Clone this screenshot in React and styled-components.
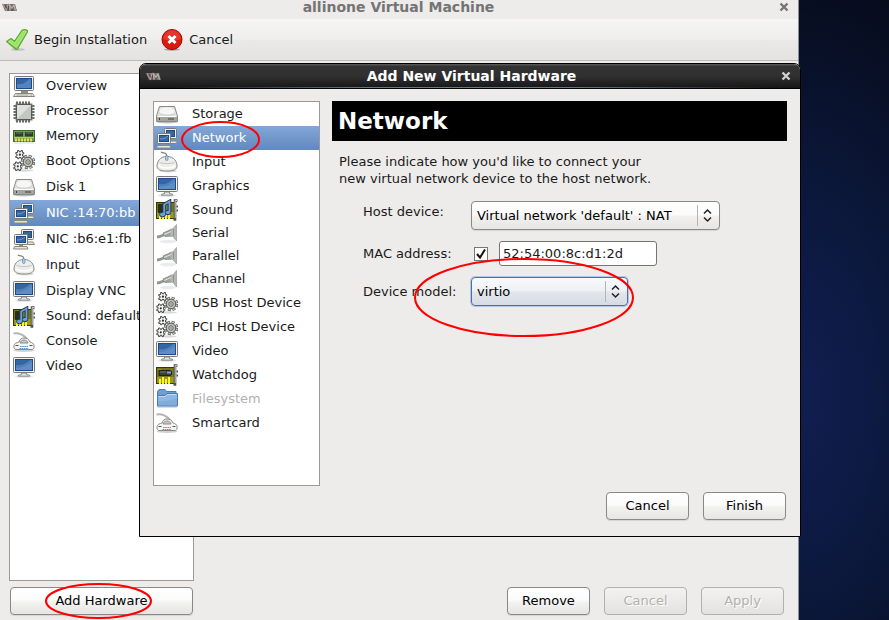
import React, { useState } from "react";
import styled, { createGlobalStyle, css } from "styled-components";

const GlobalStyle = createGlobalStyle`
  *, *::before, *::after { box-sizing: border-box; }
  body { margin: 0; background: #0b1638; }
  body, button, input, select {
    font-family: "DejaVu Sans", Verdana, sans-serif;
    font-size: 13px;
    line-height: 17px;
    color: #1a1a1a;
  }
`;

/* ---------- icons ---------- */

const IconSvg = styled.svg`
  display: block;
  flex: none;
  width: 22px;
  height: 22px;
`;

const Icon = ({ children }) => (
  <IconSvg viewBox="0 0 22 22" aria-hidden="true">{children}</IconSvg>
);

const Screen = () => (
  <>
    <rect x="0.5" y="1.5" width="21" height="15" rx="1" fill="#f2f2ef" stroke="#777a75" />
    <rect x="2.5" y="3.5" width="17" height="11" fill="#3465a4" stroke="#204a87" />
    <path d="M3 14V9c6 1 10-1 14-5h2v10z" fill="#5f8fcb" opacity=".65" />
    <path d="M3 12c6 0 11-2 16-6v8H3z" fill="#8fb2dd" opacity=".25" />
  </>
);

const DisplayIcon = () => (
  <Icon>
    <ellipse cx="11" cy="20.5" rx="9" ry="1.3" fill="#000" opacity=".12" />
    <Screen />
    <path d="M8.5 17h5v1.5l3 .7v1h-11v-1l3-.7z" fill="#e4e4e1" stroke="#777a75" strokeWidth=".8" />
  </Icon>
);

const ComputerIcon = () => (
  <Icon>
    <rect x="1.5" y=".5" width="19" height="14" rx="1" fill="#f1efe9" stroke="#777a75" />
    <rect x="3.5" y="2.5" width="15" height="10" fill="#3465a4" stroke="#204a87" />
    <path d="M4 12V8c5 1 9-1 12-5h2v9z" fill="#6b98cf" opacity=".6" />
    <path d="M8 15h7v2H8z" fill="#8e8f8a" />
    <path d="M2.500 17.500h17l2 3H.5z" fill="#e9e5dc" stroke="#8b8778" />
    <path d="M3.500 19h12M17 19h2" stroke="#a8a496" />
  </Icon>
);

const ChipIcon = () => (
  <Icon>
    <path d="M4 .500v21M7 .500v21M10 .500v21M13 .500v21M16 .500v21M.500 5h21M.500 8h21M.500 11h21M.500 14h21M.500 17h21" stroke="#3c3f3c" strokeWidth="1.600" />
    <path d="M2.500 2.500h17v17h-17z" fill="#777a75" />
    <rect x="3.500" y="3.500" width="15" height="15" rx="1" fill="#c4c6c2" stroke="#555753" />
    <path d="M4 4h14L4 18z" fill="#ecedeb" opacity=".7" />
  </Icon>
);

const MemoryIcon = () => (
  <Icon>
    <rect x=".5" y="5.500" width="21" height="11" fill="#6ea24a" stroke="#3b6e2c" />
    <rect x="2" y="7" width="8" height="4.500" fill="#333835" />
    <rect x="12" y="7" width="8" height="4.500" fill="#333835" />
    <path d="M3 8h6M13 8h6" stroke="#767c78" />
    <path d="M1 12.500h20" stroke="#a9c98b" />
    <path d="M2 15h18" stroke="#eed94f" strokeWidth="3" strokeDasharray="2 1" />
    <path d="M1 18h20" stroke="#000" opacity=".15" />
  </Icon>
);

const GearsIcon = () => (
  <Icon>
    <ellipse cx="12" cy="20.500" rx="9" ry="1.200" fill="#000" opacity=".15" />
    <circle cx="15" cy="12" r="5.800" fill="none" stroke="#555753" strokeWidth="3" strokeDasharray="2.800 1.755" />
    <circle cx="15" cy="12" r="5.800" fill="none" stroke="#c9ccc5" strokeWidth="1.600" strokeDasharray="1.800 2.755" strokeDashoffset="-.5" />
    <circle cx="15" cy="12" r="4.800" fill="#bfc3bb" stroke="#555753" />
    <circle cx="15" cy="12" r="2.200" fill="#eeeeec" stroke="#555753" />
    <circle cx="15" cy="12" r=".8" fill="#444" />
    <path d="M4.500 .5h1.500v1.200h2V.5h1.500v2h1.200v1.500H9.500v2h1.200v1.500H9.500v1.200H8V7.500H6v1.200H4.500V7.500H2.800V6H4V4H2.800V2.500h1.700z" fill="#f3f3f1" stroke="#3f413e" strokeWidth=".9" />
    <circle cx="6.900" cy="4.700" r="1.100" fill="#333" />
    <path d="M2.500 12h1.500v1.200h2V12h1.500v1.800h1.300v1.500H7.500v2h1.300v1.500H7.500v1.700H6v-1.200H4v1.200H2.500v-1.700H.8v-1.500H2v-2H.8v-1.500h1.700z" fill="#f3f3f1" stroke="#3f413e" strokeWidth=".9" />
    <circle cx="4.800" cy="16.300" r="1.100" fill="#333" />
  </Icon>
);

const DiskIcon = () => (
  <Icon>
    <ellipse cx="11" cy="19" rx="10.500" ry="1.500" fill="#000" opacity=".25" />
    <path d="M3.500 3.500h15l3 9.500v5.500h-21V13z" fill="#e2e3e0" stroke="#888a85" />
    <path d="M1 13.500h20v4.500H1z" fill="#a3a5a0" />
    <path d="M1.500 13.500h19" stroke="#fff" />
    <ellipse cx="11" cy="8.500" rx="7.500" ry="4.200" fill="#f6f6f5" />
    <path d="M3.500 10c2 3 13 3 15 0" fill="none" stroke="#c4c5c2" />
    <path d="M12.500 16h6M3 16h2" stroke="#3f413e" strokeDasharray="1 1" strokeWidth="1.800" />
  </Icon>
);

const NetworkIcon = () => (
  <Icon>
    <rect x="8.500" y="1.500" width="12" height="10" rx="1" fill="#f1f0eb" stroke="#777a75" />
    <rect x="10.500" y="3.500" width="8" height="6" fill="#3465a4" stroke="#204a87" />
    <path d="M14 14h6l1.500 2.500H14z" fill="#e9e5dc" stroke="#8b8778" />
    <rect x="1.500" y="6.500" width="13" height="10" rx="1" fill="#f1f0eb" stroke="#777a75" />
    <rect x="3.500" y="8.500" width="9" height="6" fill="#3465a4" stroke="#204a87" />
    <path d="M4 12c4 0 6-1 8-3" stroke="#729fcf" fill="none" />
    <path d="M6 17h4v1.500H6z" fill="#8e8f8a" />
    <path d="M1.500 18.500h12.500l1 2.500H.5z" fill="#e9e5dc" stroke="#8b8778" />
  </Icon>
);

const MouseIcon = () => (
  <Icon>
    <ellipse cx="12" cy="20" rx="9" ry="1.500" fill="#000" opacity=".15" />
    <path d="M5 .8c1 2 4 .3 5.200 2.200.5.800.2 1.500.2 2.500" fill="none" stroke="#777a75" strokeWidth="1.200" />
    <path d="M1 15c0-4.500 3-9.500 10-9.500S21 10.500 21 15c0 3.500-3.500 5-10 5S1 18.500 1 15z" fill="#ededea" stroke="#888a85" />
    <path d="M3.500 11.500c4 1.500 11 1.500 15 0" fill="none" stroke="#c5c7c2" />
    <path d="M3 14c1 4 15 4 16 0" fill="none" stroke="#fff" strokeWidth="1.500" />
    <rect x="9.500" y="4.500" width="2.500" height="5" rx="1.200" fill="#a8c9ed" stroke="#4f7db2" strokeWidth=".6" />
  </Icon>
);

const Card = () => (
  <>
    <rect x=".5" y="3.500" width="18" height="16" fill="#77771a" stroke="#373800" />
    <path d="M1 13h17v6H1z" fill="#9a9a22" />
    <path d="M4 15v5M7 13v7M10 15v5M13 13v7" stroke="#fcf32b" strokeWidth="2" />
    <path d="M2.500 6h3M2.500 9h2" stroke="#b1b143" />
    <path d="M21.500 1.500H19v19h-1.500" fill="none" stroke="#4f524d" strokeWidth="2.600" />
    <path d="M21.500 1.500h-2.300V19" fill="none" stroke="#c7c9c4" />
    <path d="M20.500 7.500H22M20.500 11.500H22" stroke="#555" strokeWidth="2" />
  </>
);

const SoundIcon = () => (
  <Icon>
    <Card />
    <rect x="2" y="5" width="6" height="9" fill="#26311c" />
    <path d="M8 15V5.500l5.500-3V13" fill="none" stroke="#183861" strokeWidth="3.600" />
    <ellipse cx="6.500" cy="15.500" rx="3" ry="2.300" fill="#729fcf" stroke="#183861" />
    <ellipse cx="12" cy="13.500" rx="2.700" ry="2.200" fill="#729fcf" stroke="#183861" />
    <path d="M8.200 15V5.500l5.300-3V13" fill="none" stroke="#729fcf" strokeWidth="1.800" />
  </Icon>
);

const CardIcon = () => (
  <Icon>
    <Card />
    <path d="M3 6.500h11l1.500 1v3L14 11.500H3z" fill="#393d3b" stroke="#202221" />
    <path d="M11 8.500h4" stroke="#78a5dc" strokeWidth="2" />
    <path d="M4 8h6" stroke="#777d79" />
  </Icon>
);

const PlugIcon = () => (
  <Icon>
    <ellipse cx="12" cy="18.500" rx="8" ry="1.800" fill="#000" opacity=".08" />
    <path d="M1 14c3 0 5-1.500 8-2.500" stroke="#93958f" strokeWidth="2.800" fill="none" />
    <path d="M7 10l8-3.500V13l-6 .500z" fill="#a5a7a2" stroke="#7e807b" strokeWidth=".8" />
    <path d="M14 6.500l3-.8 3.500-4.200V18L17 13.500l-3-.5z" fill="#b4b6b1" stroke="#979994" strokeWidth=".7" />
    <path d="M17.500 6v7" stroke="#8f918c" />
    <path d="M8 11.500l7-3" stroke="#e4e5e2" />
  </Icon>
);

const ConsoleIcon = () => (
  <Icon>
    <ellipse cx="11" cy="19.500" rx="10.500" ry="1.500" fill="#000" opacity=".18" />
    <path d="M.5 2.500c6-.8 10 1.500 13.500 5.500" fill="none" stroke="#b4b6b1" strokeWidth="2" />
    <path d="M6 11c1-3 2.500-4 5-4s5 1 6 4c2 .5 4 1.500 4 3.500v2c0 1-1 2-2 2H3c-1 0-2-1-2-2v-2C1 12.500 4 11.500 6 11z" fill="#f5f5f3" stroke="#888a85" />
    <path d="M7 12c.5-2 2-3 4-3s3.500 1 4 3z" fill="#c9cac7" stroke="#777a75" strokeWidth=".8" />
    <path d="M2.500 14.500h3M16.500 14.500h3" stroke="#555753" />
    <path d="M7 15.500h8M6.500 17.500h9" stroke="#5b93d4" strokeWidth="1.200" strokeDasharray="1.600 .6" />
  </Icon>
);

const FolderIcon = () => (
  <Icon>
    <path d="M1.500 5V3.500l1.500-2h6l1.500 2h9.500V8H1.500z" fill="#6e9ed2" stroke="#4a7ab2" />
    <path d="M1.500 7.500h7.500l2-2h10.500v12.500h-20z" fill="#8fb7e3" stroke="#4a7ab2" />
    <path d="M2.500 8.500H9.500l2-2h9" fill="none" stroke="#c3daf2" />
    <path d="M2 13c7 1 13-1 19-3v8H2z" fill="#6d9cd0" opacity=".4" />
    <path d="M1 19.200h20" stroke="#000" opacity=".2" />
  </Icon>
);

const CheckIcon = () => (
  <Icon>
    <ellipse cx="12" cy="20.500" rx="7" ry="1.300" fill="#000" opacity=".15" />
    <path d="M.6 12.500L5 9.500l3.500 2.800L16 1.200q3-1.400 6 .8L11.500 20q-1 .8-2 0z" fill="#84d24e" stroke="#5aa82c" strokeWidth="1.100" strokeLinejoin="round" />
    <path d="M2.500 12.800L4.800 11l4 3.200L17 2.200q1.500-.6 3.200.2L10.500 18z" fill="#9be068" stroke="#c2f29c" strokeWidth=".7" />
  </Icon>
);

const StopIcon = () => (
  <Icon>
    <ellipse cx="11" cy="20.500" rx="8" ry="1.200" fill="#000" opacity=".3" />
    <circle cx="11" cy="10.500" r="10" fill="#d81a10" stroke="#a40000" />
    <path d="M2 10a9 9 0 0118 0c-5 2-13 2-18 0z" fill="#ef5145" opacity=".5" />
    <path d="M7.500 7l7 7m0-7l-7 7" stroke="#fff" strokeWidth="3" />
  </Icon>
);

const LogoSvg = styled.svg`
  display: block;
  width: 15px;
  height: 9px;
`;

const VmLogo = () => (
  <LogoSvg viewBox="0 0 15 9" aria-hidden="true">
    <path d="M0 1h13l2 7H3z" fill="#77736f" />
    <path d="M1 1.500l3.500 5.500L6 1.500" fill="none" stroke="#a9a39e" strokeWidth="1.300" />
    <path d="M3 2l1.500 3.500" stroke="#8b3240" strokeWidth="1.200" />
    <path d="M8 7.500L7.500 2l2.300 3L12 2l1.500 5.500" fill="none" stroke="#b4b0ac" strokeWidth="1.200" />
    <path d="M6 8l.5-5M10 8V6" stroke="#383838" strokeWidth=".8" />
  </LogoSvg>
);

const CloseSvg = styled.svg`
  display: block;
  width: 10px;
  height: 10px;
`;

const CloseGlyph = () => (
  <CloseSvg viewBox="0 0 10 10" aria-hidden="true">
    <path d="M1.500 1.500l7 7m0-7l-7 7" stroke="currentColor" strokeWidth="2.400" />
  </CloseSvg>
);

/* ---------- shared controls ---------- */

const PushButton = styled.button`
  position: relative;
  height: 28px;
  min-width: ${(p) => (p.$wide ? "100%" : "83px")};
  padding: 0 8px 1px;
  border: 1px solid #8b8985;
  border-radius: 4px;
  background: linear-gradient(#ffffff, #fbfbfb 45%, #f2f2f1 55%, #e6e5e3);
  box-shadow: 0 1px 1px rgba(0, 0, 0, 0.1);
  color: #000;
  &:disabled {
    border-color: #b2b0ad;
    background: linear-gradient(#f3f2f1, #e3e2e0);
    box-shadow: none;
    color: #b3b1ae;
    text-shadow: 1px 1px 0 #fff;
  }
`;

const IconButton = styled.button`
  display: flex;
  padding: 0;
  border: 0;
  background: none;
  color: ${(p) => (p.$light ? "#d0d0d0" : "#747474")};
`;

const TitleBar = styled.header`
  display: grid;
  grid-template-columns: 16px 1fr 10px;
  align-items: center;
  height: ${(p) => (p.$dark ? "25px" : "19px")};
  padding: ${(p) => (p.$dark ? "0 9px 0 6px" : "0 9px 5px 2px")};
  ${(p) =>
    p.$dark &&
    css`
      border-bottom: 1px solid #000;
      border-radius: 6px 6px 0 0;
      background:
        linear-gradient(90deg, transparent 5%, #61799c 35%, #61799c 65%, transparent 95%) 0 100% / 100% 1px no-repeat,
        linear-gradient(#555 0 1px, #333 2px, #303030 50%, #171717);
      color: #fff;
    `}
`;

const TitleText = styled.h1`
  margin: 0;
  font-size: 14px;
  line-height: 14px;
  text-align: center;
  color: ${(p) => (p.$dark ? "#fff" : "#747474")};
`;

const DeviceList = styled.ul`
  margin: 0;
  padding: 0;
  list-style: none;
  overflow: hidden;
  border: 1px solid #9c9a96;
  background: #fff;
  ${(p) => (p.$grow ? "flex: 1;" : "min-height: 385px;")}
`;

const DeviceRow = styled.li`
  height: ${(p) => p.$height}px;
  background: ${(p) => (p.$selected ? "linear-gradient(#83a7d8, #6189be)" : "transparent")};
`;

const DeviceButton = styled.button`
  display: flex;
  align-items: center;
  gap: ${(p) => p.$gap}px;
  width: 100%;
  height: 100%;
  padding: 0 0 0 ${(p) => p.$inset}px;
  border: 0;
  background: none;
  text-align: left;
  white-space: nowrap;
  color: ${(p) => (p.$selected ? "#fff" : "#1a1a1a")};
  &:disabled { color: #b3b1ae; }
`;

const DeviceLabel = styled.span`
  position: relative;
  padding-bottom: 2px;
`;

const MarkSvg = styled.svg`
  position: absolute;
  left: ${(p) => p.$left}px;
  top: ${(p) => p.$top}px;
  z-index: 2;
  overflow: visible;
  pointer-events: none;
`;

const Mark = ({ width, height, left, top }) => (
  <MarkSvg width={width} height={height} $left={left} $top={top} aria-hidden="true">
    <ellipse cx={width / 2} cy={height / 2} rx={width / 2 - 1} ry={height / 2 - 1} fill="none" stroke="#f00" strokeWidth="2" />
  </MarkSvg>
);

/* ---------- windows ---------- */

const Desktop = styled.div`
  position: relative;
  min-height: 100vh;
  padding-right: 90px;
  display: flex;
  background: radial-gradient(ellipse 260px 500px at 90% 64%, #111f50 0, #0e1b47 20%, #0b1738 45%, #060a18 92%);
`;

const MachineWindow = styled.main`
  flex: 1;
  display: flex;
  flex-direction: column;
  min-height: 100vh;
  border-right: 1px solid #8f8f8f;
  background: #edeceb;
`;

const Toolbar = styled.div`
  display: flex;
  align-items: center;
  gap: 14px;
  height: 42px;
  padding: 0 6px;
  border-bottom: 1px solid #bdbbb8;
  background: linear-gradient(#f5f5f3, #efeeec 50%, #eae9e7 51%, #e4e3e1);
`;

const ToolButton = styled.button`
  display: flex;
  align-items: center;
  gap: 6px;
  padding: 0;
  border: 0;
  background: none;
`;

const MachineBody = styled.div`
  flex: 1;
  display: flex;
  flex-direction: column;
  width: 185px;
  margin: 12px 0 0 9px;
`;

const MachineFooter = styled.footer`
  display: flex;
  gap: 14px;
  padding: 6px 14px 5px 10px;
`;

const AddSlot = styled.div`
  width: 183px;
  margin-right: auto;
`;

const Dialog = styled.section`
  position: absolute;
  left: 139px;
  right: 88px;
  top: 63px;
  border: 1px solid #000;
  border-radius: 7px 7px 0 0;
  background: #edeceb;
`;

const DialogBody = styled.div`
  display: grid;
  grid-template-columns: 167px 1fr;
  gap: 12px;
  padding: 12px 13px 0;
`;

const DialogFooter = styled.footer`
  display: flex;
  justify-content: flex-end;
  gap: 14px;
  padding: 6px 14px 16px;
`;

const PageTitle = styled.h2`
  margin: 0;
  padding: 0 6px;
  background: #000;
  color: #fff;
  font-size: 23px;
  line-height: 40px;
`;

const Intro = styled.p`
  margin: 12px 7px 0;
`;

const Form = styled.form`
  display: grid;
  grid-template-columns: 108px 1fr;
  row-gap: 11px;
  align-items: center;
  margin: 14px 0 0 31px;
`;

const FieldLabel = styled.label`
  white-space: nowrap;
  ${(p) => p.$top && "align-self: start; padding-top: 2px;"}
`;

const AddressRow = styled.div`
  display: flex;
  align-items: center;
  gap: 11px;
  padding-left: 3px;
`;

const TickBox = styled.input`
  appearance: none;
  width: 14px;
  height: 14px;
  margin: 0;
  border: 1px solid #777;
  background: #fff;
  &:checked {
    background: #fff url("data:image/svg+xml,%3Csvg xmlns='http://www.w3.org/2000/svg' viewBox='0 0 12 12'%3E%3Cpath d='M2 6l3 3.500 5-8' fill='none' stroke='%23111' stroke-width='2'/%3E%3C/svg%3E") center / 12px 12px no-repeat;
  }
`;

const AddressInput = styled.input`
  width: 158px;
  height: 25px;
  padding: 0 3px;
  border: 1px solid #777571;
  border-radius: 3px;
  background: #fff;
`;

const ComboBox = styled.div`
  position: relative;
  width: ${(p) => p.$width}px;
`;

const Combo = styled.select`
  appearance: none;
  display: block;
  width: 100%;
  height: 29px;
  padding: 0 30px 1px 5px;
  border: 1px solid ${(p) => (p.$active ? "#4f709e" : "#8b8985")};
  border-radius: 4px;
  background: ${(p) =>
    p.$active
      ? "linear-gradient(#f8fafd, #edf0f5 48%, #e3e6ec 52%, #d6dbe4)"
      : "linear-gradient(#ffffff, #fafafa 48%, #f1f1f0 52%, #e6e5e3)"};
  box-shadow: ${(p) => (p.$active ? "0 0 0 1px #b3c6e3" : "0 1px 1px rgba(0, 0, 0, 0.1)")};
  color: #000;
`;

const ComboArrows = styled.svg`
  position: absolute;
  right: 7px;
  top: 4px;
  width: 16px;
  height: 21px;
  pointer-events: none;
`;

const Chooser = ({ id, value, width, active, children }) => (
  <ComboBox $width={width}>
    <Combo id={id} defaultValue={value} $active={active}>
      <option>{value}</option>
    </Combo>
    <ComboArrows viewBox="0 0 16 21" aria-hidden="true">
      <path d="M.5 0v21" stroke="#b7b5b2" />
      <path d="M7 8.500l3.500-3.500L14 8.500M7 12.500l3.500 3.500 3.500-3.500" fill="none" stroke="#222" strokeWidth="1.500" />
    </ComboArrows>
    {children}
  </ComboBox>
);

/* ---------- data ---------- */

const machineDevices = [
  ["Overview", ComputerIcon, 25],
  ["Processor", ChipIcon, 25],
  ["Memory", MemoryIcon, 24],
  ["Boot Options", GearsIcon, 26],
  ["Disk 1", DiskIcon, 26],
  ["NIC :14:70:bb", NetworkIcon, 26],
  ["NIC :b6:e1:fb", NetworkIcon, 26],
  ["Input", MouseIcon, 26],
  ["Display VNC", DisplayIcon, 26],
  ["Sound: default", SoundIcon, 25],
  ["Console", ConsoleIcon, 25],
  ["Video", DisplayIcon, 25],
];

const hardwareTypes = [
  ["Storage", DiskIcon, 24],
  ["Network", NetworkIcon, 24],
  ["Input", MouseIcon, 24],
  ["Graphics", DisplayIcon, 24],
  ["Sound", SoundIcon, 24],
  ["Serial", PlugIcon, 23],
  ["Parallel", PlugIcon, 23],
  ["Channel", PlugIcon, 23],
  ["USB Host Device", GearsIcon, 24],
  ["PCI Host Device", GearsIcon, 24],
  ["Video", DisplayIcon, 24],
  ["Watchdog", CardIcon, 24],
  ["Filesystem", FolderIcon, 24],
  ["Smartcard", ConsoleIcon, 24],
];

const Devices = ({ items, selected, onSelect, inset, gap, grow, disabled, marked }) => (
  <DeviceList $grow={grow}>
    {items.map(([name, Glyph, height]) => (
      <DeviceRow key={name} $height={height} $selected={name === selected}>
        <DeviceButton
          type="button"
          $inset={inset}
          $gap={gap}
          $selected={name === selected}
          disabled={name === disabled}
          onClick={() => onSelect(name)}
        >
          <Glyph />
          <DeviceLabel>
            {name}
            {name === marked && <Mark width={79} height={37} left={-11} top={-8} />}
          </DeviceLabel>
        </DeviceButton>
      </DeviceRow>
    ))}
  </DeviceList>
);

export default function App() {
  const [device, setDevice] = useState("NIC :14:70:bb");
  const [hardware, setHardware] = useState("Network");

  return (
    <>
      <GlobalStyle />
      <Desktop>
        <MachineWindow>
          <TitleBar>
            <VmLogo />
            <TitleText>allinone Virtual Machine</TitleText>
            <IconButton type="button" aria-label="Close machine window"><CloseGlyph /></IconButton>
          </TitleBar>
          <Toolbar>
            <ToolButton type="button"><CheckIcon />Begin Installation</ToolButton>
            <ToolButton type="button"><StopIcon />Cancel</ToolButton>
          </Toolbar>
          <MachineBody>
            <Devices items={machineDevices} selected={device} onSelect={setDevice} inset={3} gap={11} grow />
          </MachineBody>
          <MachineFooter>
            <AddSlot>
              <PushButton type="button" $wide>
                Add Hardware
                <Mark width={107} height={36} left={34} top={-5} />
              </PushButton>
            </AddSlot>
            <PushButton type="button">Remove</PushButton>
            <PushButton type="button" disabled>Cancel</PushButton>
            <PushButton type="button" disabled>Apply</PushButton>
          </MachineFooter>
        </MachineWindow>

        <Dialog role="dialog" aria-label="Add New Virtual Hardware">
          <TitleBar $dark>
            <VmLogo />
            <TitleText as="h2" $dark>Add New Virtual Hardware</TitleText>
            <IconButton type="button" $light aria-label="Close dialog"><CloseGlyph /></IconButton>
          </TitleBar>
          <DialogBody>
            <Devices
              items={hardwareTypes}
              selected={hardware}
              onSelect={setHardware}
              inset={2}
              gap={14}
              disabled="Filesystem"
              marked="Network"
            />
            <div>
              <PageTitle>Network</PageTitle>
              <Intro>
                Please indicate how you'd like to connect your
                <br />
                new virtual network device to the host network.
              </Intro>
              <Form onSubmit={(e) => e.preventDefault()}>
                <FieldLabel htmlFor="host" $top>Host device:</FieldLabel>
                <Chooser id="host" value="Virtual network 'default' : NAT" width={249} />
                <FieldLabel htmlFor="mac">MAC address:</FieldLabel>
                <AddressRow>
                  <TickBox type="checkbox" defaultChecked aria-label="Use fixed MAC address" />
                  <AddressInput id="mac" defaultValue="52:54:00:8c:d1:2d" />
                </AddressRow>
                <FieldLabel htmlFor="model">Device model:</FieldLabel>
                <Chooser id="model" value="virtio" width={157} active>
                  <Mark width={220} height={79} left={-57} top={-19} />
                </Chooser>
              </Form>
            </div>
          </DialogBody>
          <DialogFooter>
            <PushButton type="button">Cancel</PushButton>
            <PushButton type="button">Finish</PushButton>
          </DialogFooter>
        </Dialog>
      </Desktop>
    </>
  );
}
